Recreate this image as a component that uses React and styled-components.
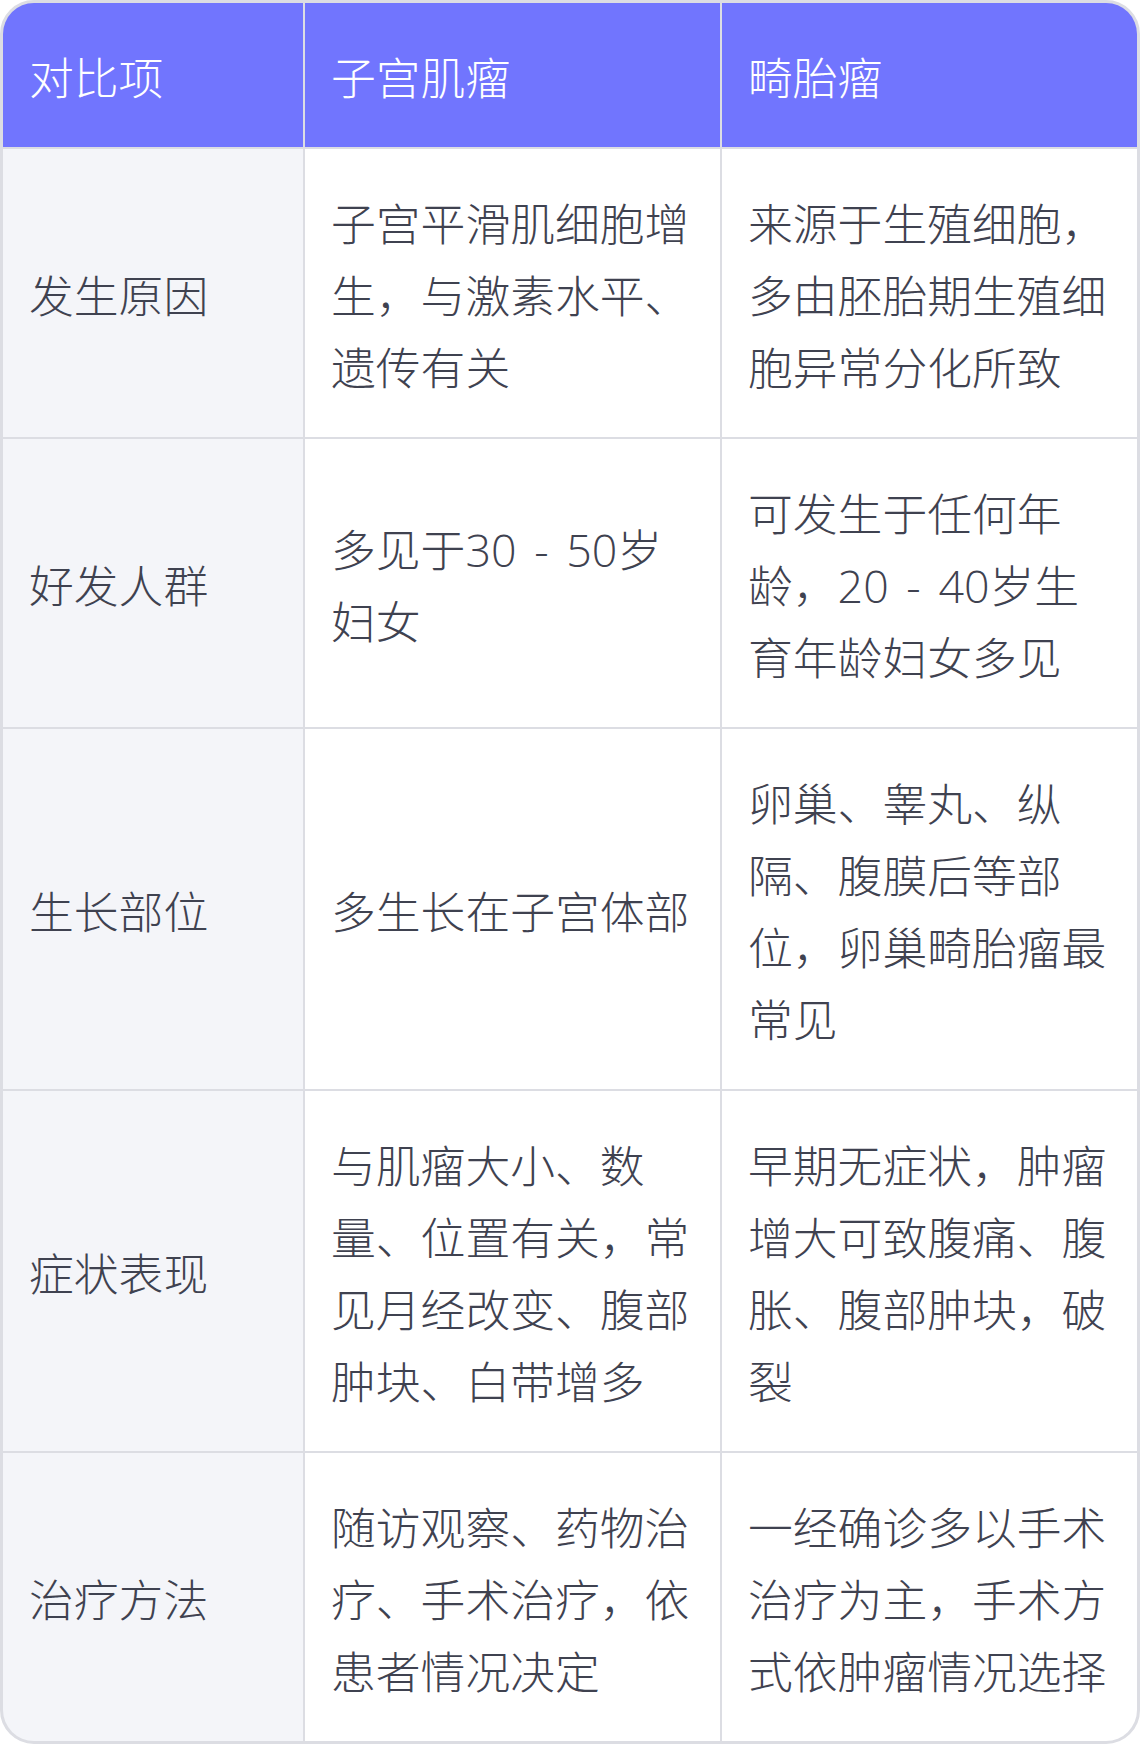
import styled, { createGlobalStyle } from "styled-components";

const GlobalStyle = createGlobalStyle`
  html, body {
    margin: 0;
    padding: 0;
    background: #ffffff;
  }
  * {
    box-sizing: border-box;
  }
`;

const Table = styled.div`
  width: 1140px;
  display: grid;
  grid-template-columns: 300px 415px 415px;
  gap: 2px;
  background: #dcdde3;
  border: 3px solid #dcdde3;
  border-radius: 34px;
  overflow: hidden;
  font-family: "Open Sans", "Noto Sans CJK SC Light", "Noto Sans CJK SC DemiLight",
    "Noto Sans CJK SC", sans-serif;
  font-weight: 300;
  font-size: 44.8px;
  line-height: 72px;
  word-spacing: 6px;
`;

const Cell = styled.div`
  display: flex;
  align-items: center;
  padding: 39px 28px 33px 26px;
  background: ${(p) => (p.$head ? "#7175fe" : p.$label ? "#f4f5f9" : "#ffffff")};
  color: ${(p) => (p.$head ? "#ffffff" : "#3f4250")};
`;

const headers = ["对比项", "子宫肌瘤", "畸胎瘤"];

const rows = [
  ["发生原因", "子宫平滑肌细胞增生，与激素水平、遗传有关", "来源于生殖细胞，多由胚胎期生殖细胞异常分化所致"],
  ["好发人群", "多见于30 - 50岁妇女", "可发生于任何年龄，20 - 40岁生育年龄妇女多见"],
  ["生长部位", "多生长在子宫体部", "卵巢、睾丸、纵隔、腹膜后等部位，卵巢畸胎瘤最常见"],
  ["症状表现", "与肌瘤大小、数量、位置有关，常见月经改变、腹部肿块、白带增多", "早期无症状，肿瘤增大可致腹痛、腹胀、腹部肿块，破裂"],
  ["治疗方法", "随访观察、药物治疗、手术治疗，依患者情况决定", "一经确诊多以手术治疗为主，手术方式依肿瘤情况选择"],
];

export default function App() {
  return (
    <>
      <GlobalStyle />
      <Table>
        {headers.map((h) => (
          <Cell key={h} $head>
            {h}
          </Cell>
        ))}
        {rows.map((r) => [
          <Cell key={r[0]} $label>
            {r[0]}
          </Cell>,
          <Cell key={r[0] + "a"}>{r[1]}</Cell>,
          <Cell key={r[0] + "b"}>{r[2]}</Cell>,
        ])}
      </Table>
    </>
  );
}
